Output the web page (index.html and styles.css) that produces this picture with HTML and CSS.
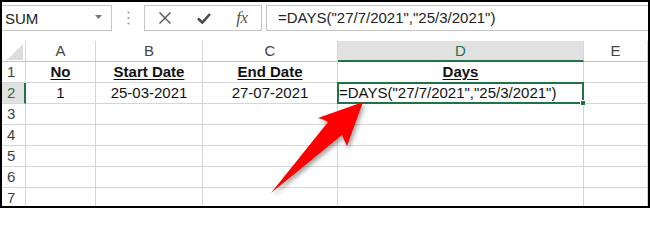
FILE: index.html
```html
<!DOCTYPE html>
<html>
<head>
<meta charset="utf-8">
<link rel="stylesheet" href="styles.css">
</head>
<body>
<div class="frame">
  <div class="toolbar">
    <div class="namebox">
      <span class="name">SUM</span>
      <svg class="dd" width="7" height="4" viewBox="0 0 7 4"><path d="M0 0 L7 0 L3.5 4 Z" fill="#777"/></svg>
    </div>
    <div class="dots">
      <svg width="3" height="14" viewBox="0 0 3 14"><circle cx="1.5" cy="1.5" r="1.1" fill="#9a9a9a"/><circle cx="1.5" cy="7" r="1.1" fill="#9a9a9a"/><circle cx="1.5" cy="12.5" r="1.1" fill="#9a9a9a"/></svg>
    </div>
    <div class="fxbox">
      <span class="btn"><svg width="12" height="12" viewBox="0 0 12 12"><path d="M0.5 0.5 L11.5 11.5 M11.5 0.5 L0.5 11.5" stroke="#555" stroke-width="1.4" fill="none"/></svg></span>
      <span class="btn"><svg width="14" height="11" viewBox="0 0 14 11"><path d="M1 5.5 L5.3 9.5 L13 1" stroke="#4a4a4a" stroke-width="2.6" fill="none"/></svg></span>
      <span class="btn fx">fx</span>
    </div>
    <div class="formula">=DAYS("27/7/2021","25/3/2021")</div>
  </div>

  <div class="grid">
    <div class="corner"><svg width="16" height="16" viewBox="0 0 16 16"><path d="M16 0 L16 16 L0 16 Z" fill="#dcdcdc"/></svg></div>
    <div class="ch">A</div>
    <div class="ch">B</div>
    <div class="ch">C</div>
    <div class="ch sel">D</div>
    <div class="ch">E</div>

    <div class="rh">1</div>
    <div class="c b">No</div>
    <div class="c b">Start Date</div>
    <div class="c b">End Date</div>
    <div class="c b">Days</div>
    <div class="c"></div>

    <div class="rh sel">2</div>
    <div class="c">1</div>
    <div class="c">25-03-2021</div>
    <div class="c">27-07-2021</div>
    <div class="c active">=DAYS("27/7/2021","25/3/2021")<span class="ring"><span class="handle"></span></span></div>
    <div class="c"></div>

    <div class="rh">3</div><div class="c"></div><div class="c"></div><div class="c"></div><div class="c"></div><div class="c"></div>
    <div class="rh">4</div><div class="c"></div><div class="c"></div><div class="c"></div><div class="c"></div><div class="c"></div>
    <div class="rh">5</div><div class="c"></div><div class="c"></div><div class="c"></div><div class="c"></div><div class="c"></div>
    <div class="rh">6</div><div class="c"></div><div class="c"></div><div class="c"></div><div class="c"></div><div class="c"></div>
    <div class="rh">7</div><div class="c"></div><div class="c"></div><div class="c"></div><div class="c"></div><div class="c"></div>
  </div>

  <svg class="arrow" width="650" height="208" viewBox="0 0 650 208">
    <path d="M363 102 L347 146 Q344 140 342 135 L271 193 L328 122 Q323 119 318 118 Z" fill="#ff0000"/>
  </svg>
</div>
</body>
</html>
```

FILE: styles.css
```css
html, body {
  margin: 0;
  padding: 0;
  background: #ffffff;
}

.frame {
  position: relative;
  width: 650px;
  height: 208px;
  box-sizing: border-box;
  border: 2px solid #000;
  overflow: hidden;
  background: #fff;
  font-family: "Liberation Sans", Arial, sans-serif;
  font-size: 15px;
  color: #1e1e1e;
}

.toolbar {
  display: flex;
  align-items: flex-start;
  height: 39px;
  padding-top: 3px;
  box-sizing: border-box;
}

.namebox {
  width: 110px;
  height: 26px;
  box-sizing: border-box;
  border: 1px solid #c6c6c6;
  border-left-color: #fff;
  display: flex;
  align-items: center;
  justify-content: space-between;
  padding: 0 9px 0 2px;
}

.name {
  line-height: 1;
  color: #222;
}

.dd {
  margin-top: -3px;
}

.dots {
  width: 32px;
  height: 26px;
  display: flex;
  align-items: center;
  justify-content: center;
  padding-left: 1px;
  box-sizing: border-box;
}

.fxbox {
  width: 118px;
  height: 26px;
  box-sizing: border-box;
  border: 1px solid #c6c6c6;
  display: grid;
  grid-template-columns: 39px 39px 38px;
  align-items: center;
  justify-items: center;
}

.btn {
  display: flex;
  align-items: center;
  justify-content: center;
  height: 24px;
}

.fx {
  font-family: "Liberation Serif", "Times New Roman", serif;
  font-style: italic;
  font-size: 17px;
  color: #555;
  letter-spacing: -0.5px;
}

.formula {
  flex: 1;
  margin-left: 4px;
  margin-right: -6px;
  height: 26px;
  box-sizing: border-box;
  border: 1px solid #c6c6c6;
  padding-left: 11px;
  line-height: 24px;
  color: #222;
  white-space: nowrap;
}

.grid {
  display: grid;
  grid-template-columns: 24px 70px 107px 135px 246px 1fr;
  grid-auto-rows: 21px;
}

.grid > div {
  box-sizing: border-box;
  border-right: 1px solid #d6d6d6;
  border-bottom: 1px solid #d6d6d6;
  line-height: 20px;
  white-space: nowrap;
}

.corner {
  display: flex;
  align-items: flex-end;
  justify-content: flex-end;
  padding: 0 2px 1px 0;
}

.grid > .corner,
.grid > .ch {
  border-bottom-color: #c4c4c4;
}

.ch {
  text-align: center;
  color: #444;
}

.ch.sel {
  background: #e1e1e1;
  color: #217346;
}

.grid > .ch.sel {
  border-bottom: 2px solid #217346;
  line-height: 19px;
}

.rh {
  padding-left: 5px;
  color: #444;
}

.rh.sel {
  background: #e1e1e1;
  color: #217346;
}

.grid > .rh.sel {
  border-right: 2px solid #217346;
}

.c {
  text-align: center;
  color: #111;
}

.b {
  font-weight: bold;
  text-decoration: underline;
  text-underline-offset: 2px;
}

.c.active {
  position: relative;
  text-align: left;
  padding-left: 1px;
  overflow: visible;
}

.ring {
  position: absolute;
  left: -1px;
  top: -1px;
  right: -1px;
  bottom: -1px;
  border: 2px solid #217346;
}

.handle {
  position: absolute;
  right: -4px;
  bottom: -4px;
  width: 4px;
  height: 4px;
  background: #217346;
  border: 1px solid #fff;
}

.arrow {
  position: absolute;
  left: -2px;
  top: -2px;
  pointer-events: none;
  filter: drop-shadow(2px 3px 2px rgba(0, 0, 0, 0.35));
}
```
